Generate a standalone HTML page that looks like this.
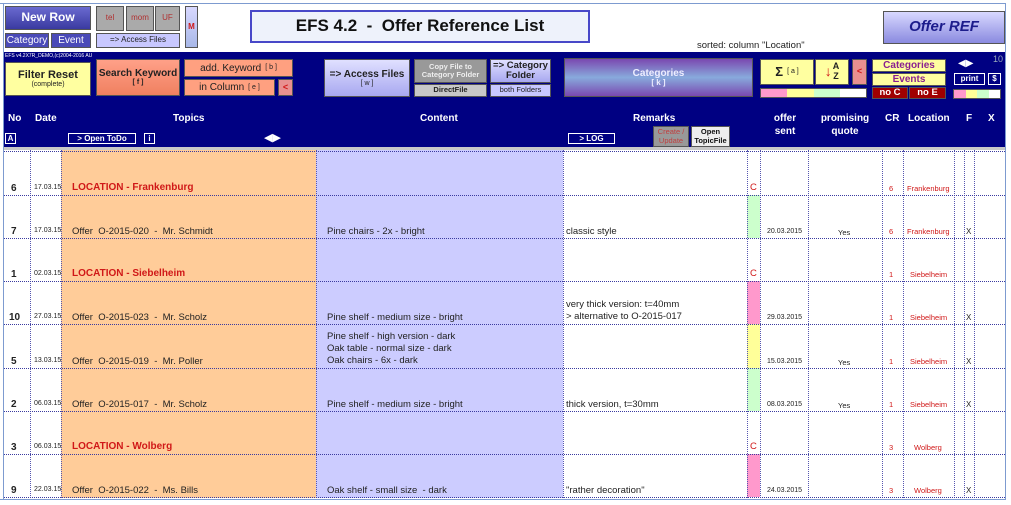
<!DOCTYPE html>
<html><head><meta charset="utf-8"><style>
*{margin:0;padding:0;box-sizing:border-box}
body{width:1011px;height:505px;overflow:hidden;background:#fff;font-family:"Liberation Sans",Arial,sans-serif;position:relative;font-size:10px;color:#222}
.a{position:absolute}
.btn{position:absolute;display:flex;flex-direction:column;align-items:center;justify-content:center;text-align:center;border:1px solid #555;line-height:1.1}
.row{flex-direction:row;white-space:nowrap;gap:4px}
.hd{position:absolute;color:#fff;font-weight:bold;font-size:10px;text-align:center;line-height:13px}
.sb{position:absolute;border:1px solid #fff;color:#fff;font-size:8px;font-weight:bold;text-align:center;line-height:10px}
.vl{position:absolute;top:150px;height:348px;border-left:1px dotted #5656b0}
.hl{position:absolute;left:4px;width:1001px;border-top:1px dotted #3a3aa0}
.t{position:absolute;font-size:9.5px;white-space:nowrap}
.r{color:#d01818}
</style></head><body>
<div class="a" style="left:0;top:3px;width:1006px;height:1px;background:#7d9bd0"></div>
<div class="a" style="left:3px;top:3px;width:1px;height:497px;background:#7d9bd0"></div>
<div class="a" style="left:1005px;top:3px;width:1px;height:497px;background:#7d9bd0"></div>
<div class="btn" style="left:5px;top:6px;width:86px;height:24px;background:linear-gradient(#6a6ad0,#3a3aa0);color:#fff;font-weight:bold;font-size:12px">New Row</div>
<div class="btn" style="left:5px;top:33px;width:44px;height:15px;background:#4a4ab8;color:#fff;font-size:10px">Category</div>
<div class="btn" style="left:51px;top:33px;width:40px;height:15px;background:#4a4ab8;color:#fff;font-size:10px">Event</div>
<div class="btn" style="left:96px;top:6px;width:28px;height:25px;background:#aaa;color:#b03030;font-size:8px">tel</div>
<div class="btn" style="left:126px;top:6px;width:28px;height:25px;background:#aaa;color:#b03030;font-size:8px">mom</div>
<div class="btn" style="left:155px;top:6px;width:25px;height:25px;background:#aaa;color:#b03030;font-size:8px">UF</div>
<div class="btn" style="left:96px;top:33px;width:84px;height:15px;background:#c8c8ff;color:#222;font-size:8px">=&gt; Access Files</div>
<div class="btn" style="left:185px;top:6px;width:13px;height:42px;background:linear-gradient(#d8d8ff,#a8b8e8);color:#d01818;font-size:8px;font-weight:bold">M</div>
<div class="btn" style="left:250px;top:10px;width:340px;height:33px;border:2px solid #4848c8;background:#eef2fb;color:#111;font-size:17px;font-weight:bold">EFS 4.2&nbsp; - &nbsp;Offer Reference List</div>
<div class="t" style="left:697px;top:40px;font-size:9.5px">sorted: column "Location"</div>
<div class="btn" style="left:883px;top:11px;width:122px;height:33px;background:linear-gradient(#d8d8ff,#8a8ae0);color:#1c1c8c;font-size:15px;font-weight:bold;font-style:italic">Offer REF</div>
<div class="a" style="left:4px;top:52px;width:1001px;height:95px;background:#000082"></div>
<div class="a" style="left:4px;top:147px;width:1001px;height:3px;background:#c8c8c8"></div>
<div class="a" style="left:5px;top:53px;color:#fff;font-size:5px">EFS v4.2X7R_DEMO,(c)2004-2016 AU</div>
<div class="btn" style="left:5px;top:62px;width:86px;height:34px;background:#ffffa0;font-weight:bold;font-size:11px">Filter Reset<span style="font-size:7px;font-weight:normal">(complete)</span></div>
<div class="btn" style="left:96px;top:59px;width:84px;height:37px;background:linear-gradient(#ffa088,#f08060);font-weight:bold;font-size:10px">Search Keyword<span style="font-size:7px">[ f ]</span></div>
<div class="btn row" style="left:184px;top:59px;width:109px;height:18px;background:#ffa080;font-size:10px">add. Keyword <span style="font-size:7px">[ b ]</span></div>
<div class="btn row" style="left:184px;top:79px;width:91px;height:17px;background:#ffa080;font-size:10px">in Column <span style="font-size:7px">[ e ]</span></div>
<div class="btn" style="left:278px;top:79px;width:15px;height:17px;background:#e89090;color:#d01818;font-size:9px;font-weight:bold">&lt;</div>
<div class="btn" style="left:324px;top:59px;width:86px;height:38px;background:linear-gradient(#e0e0ff,#a8a8f0);font-weight:bold;font-size:10px">=&gt; Access Files<span style="font-size:7px;font-weight:normal">[ w ]</span></div>
<div class="btn" style="left:414px;top:59px;width:73px;height:24px;background:#999;color:#eee;font-size:7.5px;font-weight:bold">Copy File to<br>Category Folder</div>
<div class="btn" style="left:414px;top:84px;width:73px;height:13px;background:#c8c8c8;font-size:7.5px;font-weight:bold">DirectFile</div>
<div class="btn" style="left:490px;top:59px;width:61px;height:24px;background:linear-gradient(#e0e0ff,#a8a8f0);font-size:9.5px;font-weight:bold">=&gt; Category<br>Folder</div>
<div class="btn" style="left:490px;top:84px;width:61px;height:13px;background:#c8c8ff;font-size:7.5px">both Folders</div>
<div class="btn" style="left:564px;top:58px;width:189px;height:39px;background:linear-gradient(#7a48b0,#88aadc 50%,#7a48b0);color:#eef;font-size:10px;font-weight:bold">Categories<span style="font-size:8px">[ k ]</span></div>
<div class="btn row" style="left:760px;top:59px;width:54px;height:26px;background:#ffffa0;font-size:13px;font-weight:bold">Σ <span style="font-size:7px;font-weight:normal">[ a ]</span></div>
<div class="btn row" style="left:815px;top:59px;width:34px;height:26px;background:#ffffa0;font-size:9px;font-weight:bold;gap:1px"><span style="color:#d01818;font-size:14px">↓</span><span>A<br>Z</span></div>
<div class="btn" style="left:852px;top:59px;width:15px;height:26px;background:#e89090;color:#d01818;font-size:9px;font-weight:bold">&lt;</div>
<div class="a" style="left:760px;top:88px;width:107px;height:10px;display:flex;border:1px solid #555"><div style="flex:26;background:#ff99cc"></div><div style="flex:28;background:#ffff99"></div><div style="flex:26;background:#ccffcc"></div><div style="flex:26;background:#fff"></div></div>
<div class="btn" style="left:872px;top:59px;width:74px;height:13px;background:#ffffa0;color:#8a2090;font-size:10px;font-weight:bold">Categories</div>
<div class="btn" style="left:872px;top:73px;width:74px;height:13px;background:#ffffa0;color:#8a2090;font-size:10px;font-weight:bold">Events</div>
<div class="btn" style="left:872px;top:87px;width:36px;height:12px;background:#a00000;color:#fff;font-size:9.5px;font-weight:bold">no C</div>
<div class="btn" style="left:909px;top:87px;width:37px;height:12px;background:#a00000;color:#fff;font-size:9.5px;font-weight:bold">no E</div>
<div class="a" style="left:958px;top:58px;color:#fff;font-size:10px">◀▶</div>
<div class="a" style="left:993px;top:54px;color:#9ab;font-size:9px">10</div>
<div class="sb" style="left:954px;top:73px;width:31px;height:12px">print</div>
<div class="sb" style="left:988px;top:73px;width:13px;height:12px">$</div>
<div class="a" style="left:953px;top:89px;width:48px;height:10px;display:flex;border:1px solid #555"><div style="flex:1;background:#ff99cc"></div><div style="flex:1;background:#ffff99"></div><div style="flex:1;background:#ccffcc"></div><div style="flex:1;background:#fff"></div></div>
<div class="hd" style="left:8px;top:112px">No</div>
<div class="hd" style="left:35px;top:112px">Date</div>
<div class="hd" style="left:173px;top:112px">Topics</div>
<div class="hd" style="left:420px;top:112px">Content</div>
<div class="hd" style="left:633px;top:112px">Remarks</div>
<div class="hd" style="left:770px;top:112px;width:30px">offer<br>sent</div>
<div class="hd" style="left:818px;top:112px;width:54px">promising<br>quote</div>
<div class="hd" style="left:885px;top:112px">CR</div>
<div class="hd" style="left:908px;top:112px">Location</div>
<div class="hd" style="left:966px;top:112px">F</div>
<div class="hd" style="left:988px;top:112px">X</div>
<div class="sb" style="left:5px;top:133px;width:11px;height:11px">A</div>
<div class="sb" style="left:68px;top:133px;width:68px;height:11px">&gt; Open ToDo</div>
<div class="sb" style="left:144px;top:133px;width:11px;height:11px">i</div>
<div class="a" style="left:264px;top:131px;color:#fff;font-size:11px">◀▶</div>
<div class="sb" style="left:568px;top:133px;width:47px;height:11px">&gt; LOG</div>
<div class="btn" style="left:653px;top:126px;width:36px;height:21px;background:#999;color:#c04040;font-size:7.5px">Create /<br>Update</div>
<div class="btn" style="left:691px;top:126px;width:39px;height:21px;background:#eee;color:#111;font-size:7.5px;font-weight:bold">Open<br>TopicFile</div>
<div class="a" style="left:61px;top:150px;width:255px;height:348px;background:#ffcc99"></div>
<div class="a" style="left:316px;top:150px;width:247px;height:348px;background:#ccccff"></div>
<div class="a" style="left:747px;top:195px;width:13px;height:43px;background:#ccffcc"></div>
<div class="a" style="left:747px;top:281px;width:13px;height:43px;background:#ff99cc"></div>
<div class="a" style="left:747px;top:324px;width:13px;height:44px;background:#ffff99"></div>
<div class="a" style="left:747px;top:368px;width:13px;height:43px;background:#ccffcc"></div>
<div class="a" style="left:747px;top:454px;width:13px;height:43px;background:#ff99cc"></div>
<div class="vl" style="left:30px"></div><div class="vl" style="left:61px"></div><div class="vl" style="left:316px"></div><div class="vl" style="left:563px"></div><div class="vl" style="left:747px"></div><div class="vl" style="left:760px"></div><div class="vl" style="left:808px"></div><div class="vl" style="left:882px"></div><div class="vl" style="left:903px"></div><div class="vl" style="left:954px"></div><div class="vl" style="left:964px"></div><div class="vl" style="left:974px"></div>
<div class="hl" style="top:151px"></div><div class="hl" style="top:195px"></div><div class="hl" style="top:238px"></div><div class="hl" style="top:281px"></div><div class="hl" style="top:324px"></div><div class="hl" style="top:368px"></div><div class="hl" style="top:411px"></div><div class="hl" style="top:454px"></div><div class="hl" style="top:497px"></div>
<div class="a" style="left:0;top:499px;width:1006px;height:1px;background:#7d9bd0"></div>

<div class="t" style="left:11px;top:183px;font-weight:bold;font-size:10px">6</div><div class="t" style="left:34px;top:184px;font-size:7px">17.03.15</div><div class="t r" style="left:72px;top:182px;font-weight:bold;font-size:10px">LOCATION - Frankenburg</div><div class="t r" style="left:750px;top:182px">C</div><div class="t r" style="left:889px;top:184px;font-size:7.5px">6</div><div class="t r" style="left:907px;top:184px;font-size:7.5px">Frankenburg</div>

<div class="t" style="left:11px;top:226px;font-weight:bold;font-size:10px">7</div><div class="t" style="left:34px;top:227px;font-size:7px">17.03.15</div><div class="t" style="left:72px;top:226px">Offer&nbsp; O-2015-020&nbsp; -&nbsp; Mr. Schmidt</div><div class="t" style="left:327px;top:226px">Pine chairs - 2x - bright</div><div class="t" style="left:566px;top:226px">classic style</div><div class="t" style="left:767px;top:228px;font-size:7px">20.03.2015</div><div class="t" style="left:838px;top:228px;font-size:7.5px">Yes</div><div class="t r" style="left:889px;top:227px;font-size:7.5px">6</div><div class="t r" style="left:907px;top:227px;font-size:7.5px">Frankenburg</div><div class="t" style="left:966px;top:227px;font-size:8px">X</div>

<div class="t" style="left:11px;top:269px;font-weight:bold;font-size:10px">1</div><div class="t" style="left:34px;top:270px;font-size:7px">02.03.15</div><div class="t r" style="left:72px;top:268px;font-weight:bold;font-size:10px">LOCATION - Siebelheim</div><div class="t r" style="left:750px;top:268px">C</div><div class="t r" style="left:889px;top:270px;font-size:7.5px">1</div><div class="t r" style="left:910px;top:270px;font-size:7.5px">Siebelheim</div>

<div class="t" style="left:9px;top:312px;font-weight:bold;font-size:10px">10</div><div class="t" style="left:34px;top:313px;font-size:7px">27.03.15</div><div class="t" style="left:72px;top:312px">Offer&nbsp; O-2015-023&nbsp; -&nbsp; Mr. Scholz</div><div class="t" style="left:327px;top:312px">Pine shelf - medium size - bright</div><div class="t" style="left:566px;top:299px;line-height:12px">very thick version: t=40mm<br>&gt; alternative to O-2015-017</div><div class="t" style="left:767px;top:314px;font-size:7px">29.03.2015</div><div class="t r" style="left:889px;top:313px;font-size:7.5px">1</div><div class="t r" style="left:910px;top:313px;font-size:7.5px">Siebelheim</div><div class="t" style="left:966px;top:313px;font-size:8px">X</div>

<div class="t" style="left:11px;top:356px;font-weight:bold;font-size:10px">5</div><div class="t" style="left:34px;top:357px;font-size:7px">13.03.15</div><div class="t" style="left:72px;top:356px">Offer&nbsp; O-2015-019&nbsp; -&nbsp; Mr. Poller</div><div class="t" style="left:327px;top:331px;line-height:12px">Pine shelf - high version - dark<br>Oak table - normal size - dark<br>Oak chairs - 6x - dark</div><div class="t" style="left:767px;top:358px;font-size:7px">15.03.2015</div><div class="t" style="left:838px;top:358px;font-size:7.5px">Yes</div><div class="t r" style="left:889px;top:357px;font-size:7.5px">1</div><div class="t r" style="left:910px;top:357px;font-size:7.5px">Siebelheim</div><div class="t" style="left:966px;top:357px;font-size:8px">X</div>

<div class="t" style="left:11px;top:399px;font-weight:bold;font-size:10px">2</div><div class="t" style="left:34px;top:400px;font-size:7px">06.03.15</div><div class="t" style="left:72px;top:399px">Offer&nbsp; O-2015-017&nbsp; -&nbsp; Mr. Scholz</div><div class="t" style="left:327px;top:399px">Pine shelf - medium size - bright</div><div class="t" style="left:566px;top:399px">thick version, t=30mm</div><div class="t" style="left:767px;top:401px;font-size:7px">08.03.2015</div><div class="t" style="left:838px;top:401px;font-size:7.5px">Yes</div><div class="t r" style="left:889px;top:400px;font-size:7.5px">1</div><div class="t r" style="left:910px;top:400px;font-size:7.5px">Siebelheim</div><div class="t" style="left:966px;top:400px;font-size:8px">X</div>

<div class="t" style="left:11px;top:442px;font-weight:bold;font-size:10px">3</div><div class="t" style="left:34px;top:443px;font-size:7px">06.03.15</div><div class="t r" style="left:72px;top:441px;font-weight:bold;font-size:10px">LOCATION - Wolberg</div><div class="t r" style="left:750px;top:441px">C</div><div class="t r" style="left:889px;top:443px;font-size:7.5px">3</div><div class="t r" style="left:914px;top:443px;font-size:7.5px">Wolberg</div>

<div class="t" style="left:11px;top:485px;font-weight:bold;font-size:10px">9</div><div class="t" style="left:34px;top:486px;font-size:7px">22.03.15</div><div class="t" style="left:72px;top:485px">Offer&nbsp; O-2015-022&nbsp; -&nbsp; Ms. Bills</div><div class="t" style="left:327px;top:485px">Oak shelf - small size&nbsp; - dark</div><div class="t" style="left:566px;top:485px">"rather decoration"</div><div class="t" style="left:767px;top:487px;font-size:7px">24.03.2015</div><div class="t r" style="left:889px;top:486px;font-size:7.5px">3</div><div class="t r" style="left:914px;top:486px;font-size:7.5px">Wolberg</div><div class="t" style="left:966px;top:486px;font-size:8px">X</div>
</body></html>
